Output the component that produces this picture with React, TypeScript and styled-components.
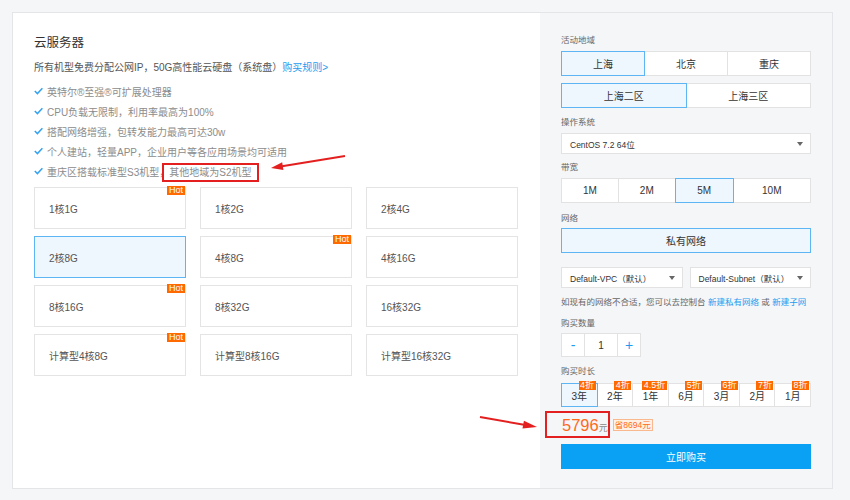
import React from 'react';
import styled, { createGlobalStyle } from 'styled-components';

const GlobalStyle = createGlobalStyle`
  html, body { margin: 0; padding: 0; background: #f5f6f8; }
  body { font-family: "Liberation Sans", "Noto Sans CJK SC", sans-serif; color: #333; }
  * { box-sizing: border-box; }
`;

const Page = styled.div`
  position: relative;
  width: 850px;
  height: 500px;
  padding: 12px 0 0 12px;
`;

const Card = styled.div`
  display: flex;
  width: 821px;
  height: 477px;
  background: #fff;
  border: 1px solid #e3e5e8;
`;

const LeftPanel = styled.div`
  flex: 1;
  padding: 21px 21px 0 21px;
`;

const Title = styled.div`
  font-size: 12.5px;
  line-height: 18px;
  color: #333;
`;

const Desc = styled.div`
  margin-top: 8px;
  font-size: 10px;
  line-height: 16px;
  color: #555;
  white-space: nowrap;
`;

const Link = styled.span`
  color: #1e9bf0;
`;

const CheckList = styled.ul`
  list-style: none;
  margin: 5px 0 0 0;
  padding: 0;
`;

const CheckItem = styled.li`
  display: flex;
  align-items: center;
  gap: 4px;
  height: 20px;
  font-size: 10px;
  color: #8c8c8c;
  white-space: nowrap;
`;

const SpecGrid = styled.div`
  display: grid;
  grid-template-columns: repeat(3, 152px);
  column-gap: 14px;
  row-gap: 7px;
  margin-top: 6px;
`;

const SpecBox = styled.div<{ $active?: boolean }>`
  position: relative;
  display: flex;
  align-items: center;
  height: 42px;
  padding-left: 14px;
  font-size: 10px;
  color: #555;
  background: ${p => (p.$active ? '#eef7fe' : '#fff')};
  border: 1px solid ${p => (p.$active ? '#5db5f3' : '#e4e4e4')};
`;

const HotBadge = styled.span`
  position: absolute;
  top: -2px;
  right: 0;
  height: 9px;
  padding: 0 2px;
  font-size: 9px;
  line-height: 9px;
  color: #fff;
  background: #ff6a00;
`;

const RightPanel = styled.div`
  width: 292px;
  padding: 20px 21px 0 21px;
  background: #f5f6f8;
`;

const Label = styled.div<{ $mt?: number }>`
  margin-top: ${p => p.$mt ?? 0}px;
  font-size: 8.5px;
  line-height: 14px;
  color: #666;
`;

const TabRow = styled.div<{ $mt: number; $h?: number }>`
  display: flex;
  margin-top: ${p => p.$mt}px;
  height: ${p => p.$h ?? 25}px;
  padding-left: 1px;
`;

const Tab = styled.div<{ $active?: boolean; $flex?: number }>`
  position: relative;
  flex: ${p => p.$flex ?? 1} 1 0;
  margin-left: -1px;
  display: flex;
  align-items: center;
  justify-content: center;
  font-size: 10px;
  color: #333;
  background: ${p => (p.$active ? '#eef7fe' : '#fff')};
  border: 1px solid ${p => (p.$active ? '#5db5f3' : '#e2e2e2')};
  z-index: ${p => (p.$active ? 1 : 0)};
`;

const DiscountBadge = styled.span`
  position: absolute;
  top: -3px;
  right: 1px;
  height: 9px;
  padding: 0 1.5px;
  font-size: 9px;
  line-height: 9px;
  color: #fff;
  background: #ff6a00;
`;

const SelectBox = styled.div<{ $mt?: number }>`
  flex: 1;
  display: flex;
  align-items: center;
  justify-content: space-between;
  margin-top: ${p => p.$mt ?? 0}px;
  height: 21px;
  padding: 0 7px 0 8px;
  font-size: 8.5px;
  color: #333;
  background: #fff;
  border: 1px solid #e2e2e2;
  white-space: nowrap;
`;

const SelectRow = styled.div`
  display: flex;
  gap: 7px;
  margin-top: 14px;
`;

const NetworkButton = styled.div`
  display: flex;
  align-items: center;
  justify-content: center;
  margin-top: 3px;
  height: 25px;
  font-size: 10px;
  color: #333;
  background: #eef7fe;
  border: 1px solid #5db5f3;
`;

const Helper = styled.div`
  margin-top: 7px;
  font-size: 8.5px;
  line-height: 14px;
  color: #666;
  white-space: nowrap;
`;

const Stepper = styled.div`
  display: flex;
  margin-top: 3px;
  height: 24px;
`;

const StepCell = styled.div<{ $w: number; $blue?: boolean }>`
  width: ${p => p.$w}px;
  margin-left: -1px;
  display: flex;
  align-items: center;
  justify-content: center;
  font-size: ${p => (p.$blue ? 14 : 10)}px;
  color: ${p => (p.$blue ? '#1e9bf0' : '#333')};
  background: #fff;
  border: 1px solid #e2e2e2;
  &:first-child { margin-left: 0; }
`;

const PriceRow = styled.div`
  display: flex;
  align-items: center;
  margin-top: 5px;
  height: 26px;
  padding-left: 1px;
`;

const Price = styled.span`
  font-size: 16.5px;
  color: #ff6a1a;
`;

const Unit = styled.span`
  font-size: 9px;
  color: #888;
  margin-top: 5px;
`;

const SaveTag = styled.span`
  margin-left: 5px;
  height: 12px;
  padding: 0 1px;
  font-size: 8.5px;
  line-height: 10px;
  color: #ff6a1a;
  background: #fff1e6;
  border: 1px solid #f9b88e;
`;

const BuyButton = styled.div`
  display: flex;
  align-items: center;
  justify-content: center;
  margin-top: 6px;
  height: 25px;
  font-size: 10px;
  color: #fff;
  background: #0aa1f5;
`;

const Overlay = styled.svg`
  position: absolute;
  top: 0;
  left: 0;
  pointer-events: none;
`;

const Check = () => (
  <svg width="9" height="8" viewBox="0 0 9 8">
    <polyline points="0.8,4 3.4,6.6 8.4,1.2" fill="none" stroke="#36a3ef" strokeWidth="1.5" />
  </svg>
);

const Caret = () => (
  <svg width="6" height="4" viewBox="0 0 6 4">
    <polygon points="0,0 6,0 3,4" fill="#666" />
  </svg>
);

const specs: { t: string; hot?: boolean; active?: boolean }[] = [
  { t: '1核1G', hot: true },
  { t: '1核2G' },
  { t: '2核4G' },
  { t: '2核8G', active: true },
  { t: '4核8G', hot: true },
  { t: '4核16G' },
  { t: '8核16G', hot: true },
  { t: '8核32G' },
  { t: '16核32G' },
  { t: '计算型4核8G', hot: true },
  { t: '计算型8核16G' },
  { t: '计算型16核32G' },
];

const features = [
  '英特尔®至强®可扩展处理器',
  'CPU负载无限制，利用率最高为100%',
  '搭配网络增强，包转发能力最高可达30w',
  '个人建站，轻量APP，企业用户等各应用场景均可适用',
  '重庆区搭载标准型S3机型，其他地域为S2机型',
];

const durations = [
  { t: '3年', d: '4折', active: true },
  { t: '2年', d: '4折' },
  { t: '1年', d: '4.5折' },
  { t: '6月', d: '5折' },
  { t: '3月', d: '6折' },
  { t: '2月', d: '7折' },
  { t: '1月', d: '8折' },
];

export default function App() {
  return (
    <>
      <GlobalStyle />
      <Page>
        <Card>
          <LeftPanel>
            <Title>云服务器</Title>
            <Desc>
              所有机型免费分配公网IP，50G高性能云硬盘（系统盘）<Link>购买规则&gt;</Link>
            </Desc>
            <CheckList>
              {features.map(f => (
                <CheckItem key={f}>
                  <Check />
                  {f}
                </CheckItem>
              ))}
            </CheckList>
            <SpecGrid>
              {specs.map(s => (
                <SpecBox key={s.t} $active={s.active}>
                  {s.t}
                  {s.hot && <HotBadge>Hot</HotBadge>}
                </SpecBox>
              ))}
            </SpecGrid>
          </LeftPanel>
          <RightPanel>
            <Label>活动地域</Label>
            <TabRow $mt={4}>
              <Tab $active>上海</Tab>
              <Tab>北京</Tab>
              <Tab>重庆</Tab>
            </TabRow>
            <TabRow $mt={7}>
              <Tab $active>上海二区</Tab>
              <Tab>上海三区</Tab>
            </TabRow>
            <Label $mt={7}>操作系统</Label>
            <SelectBox $mt={4}>
              CentOS 7.2 64位
              <Caret />
            </SelectBox>
            <Label $mt={6}>带宽</Label>
            <TabRow $mt={4}>
              <Tab $flex={57}>1M</Tab>
              <Tab $flex={57}>2M</Tab>
              <Tab $flex={58} $active>5M</Tab>
              <Tab $flex={78}>10M</Tab>
            </TabRow>
            <Label $mt={8}>网络</Label>
            <NetworkButton>私有网络</NetworkButton>
            <SelectRow>
              <SelectBox>
                Default-VPC（默认）
                <Caret />
              </SelectBox>
              <SelectBox>
                Default-Subnet（默认）
                <Caret />
              </SelectBox>
            </SelectRow>
            <Helper>
              如现有的网络不合适，您可以去控制台 <Link>新建私有网络</Link> 或 <Link>新建子网</Link>
            </Helper>
            <Label $mt={7}>购买数量</Label>
            <Stepper>
              <StepCell $w={24} $blue>-</StepCell>
              <StepCell $w={34}>1</StepCell>
              <StepCell $w={24} $blue>+</StepCell>
            </Stepper>
            <Label $mt={7}>购买时长</Label>
            <TabRow $mt={5} $h={24}>
              {durations.map(d => (
                <Tab key={d.t} $active={d.active}>
                  {d.t}
                  <DiscountBadge>{d.d}</DiscountBadge>
                </Tab>
              ))}
            </TabRow>
            <PriceRow>
              <Price>5796</Price>
              <Unit>元</Unit>
              <SaveTag>省8694元</SaveTag>
            </PriceRow>
            <BuyButton>立即购买</BuyButton>
          </RightPanel>
        </Card>
        <Overlay width="850" height="500" viewBox="0 0 850 500">
          <rect x="163" y="164" width="95" height="17" fill="none" stroke="#e3201f" strokeWidth="2" />
          <line x1="345" y1="156" x2="282" y2="166.3" stroke="#e3201f" strokeWidth="2" />
          <polygon points="271,168 283.4,170.1 282.2,162.2" fill="#e3201f" />
          <rect x="546" y="412" width="63" height="25" fill="none" stroke="#e3201f" strokeWidth="2" />
          <line x1="480" y1="417" x2="524" y2="424.7" stroke="#e3201f" strokeWidth="2" />
          <polygon points="537,427 522.5,428.6 523.9,420.7" fill="#e3201f" />
        </Overlay>
      </Page>
    </>
  );
}
